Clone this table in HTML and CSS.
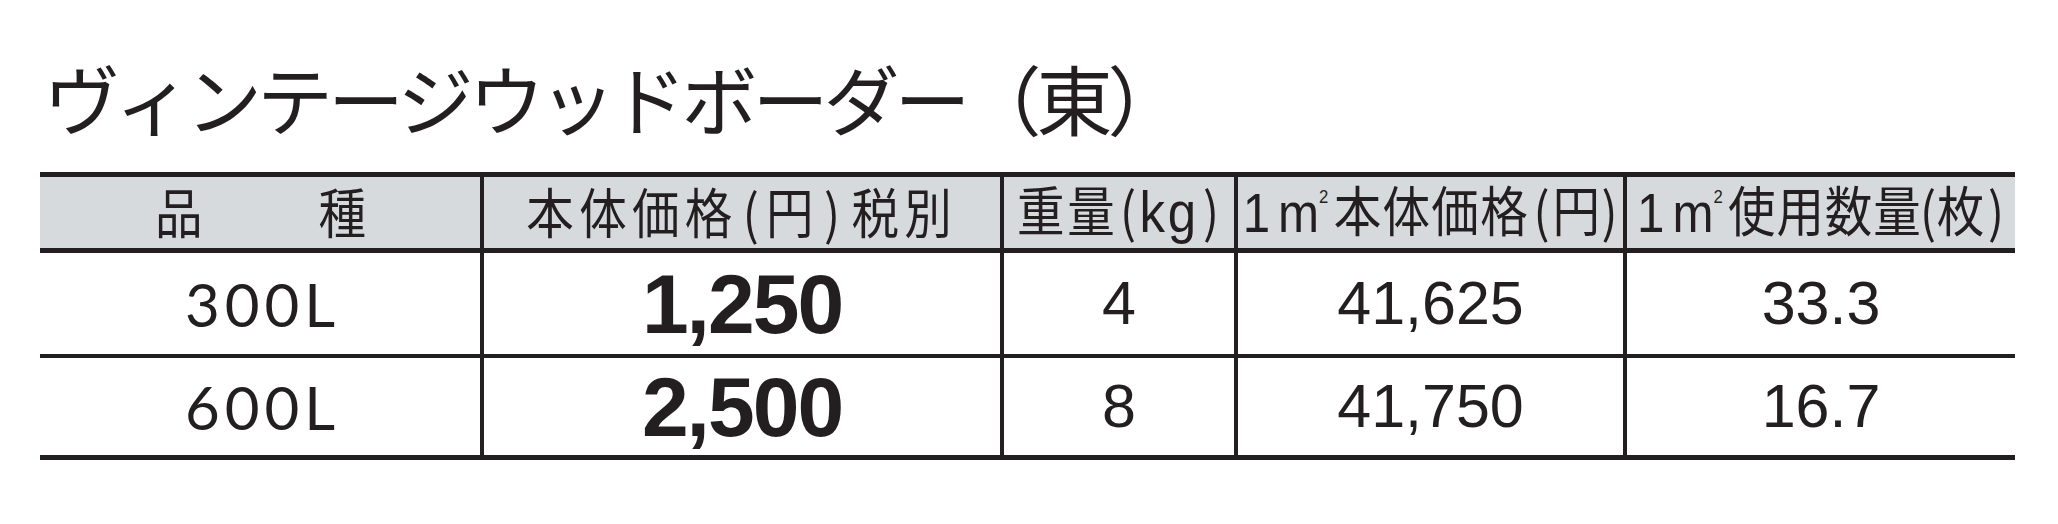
FILE: index.html
```html
<!DOCTYPE html>
<html lang="ja">
<head>
<meta charset="utf-8">
<title>ヴィンテージウッドボーダー（東）</title>
<link rel="stylesheet" href="styles.css">
</head>
<body>
<div class="page">
  <h1 class="title">ヴィンテージウッドボーダー（東）</h1>
  <div class="table">
    <div class="row head">
      <div class="cell"><span class="hx pin">品　　種</span></div>
      <div class="cell"><span class="hx c2">本体価格<span class="po">(</span>円<span class="pc">)</span>税別</span></div>
      <div class="cell"><span class="hx c3">重量<span class="po">(</span><span class="kg">kg</span><span class="pc">)</span></span></div>
      <div class="cell"><span class="hx c4"><span class="lat one">1</span><span class="lat m">m</span><span class="sq">2</span>本体価格<span class="po">(</span>円<span class="pc">)</span></span></div>
      <div class="cell"><span class="hx c5"><span class="lat one">1</span><span class="lat m">m</span><span class="sq">2</span>使用数量<span class="po">(</span>枚<span class="pc">)</span></span></div>
    </div>
    <div class="row r1">
      <div class="cell"><span class="size">300L</span></div>
      <div class="cell"><span class="price">1,250</span></div>
      <div class="cell"><span class="num">4</span></div>
      <div class="cell"><span class="num">41,625</span></div>
      <div class="cell"><span class="num">33.3</span></div>
    </div>
    <div class="row r2">
      <div class="cell"><span class="size">600L</span></div>
      <div class="cell"><span class="price">2,500</span></div>
      <div class="cell"><span class="num">8</span></div>
      <div class="cell"><span class="num">41,750</span></div>
      <div class="cell"><span class="num">16.7</span></div>
    </div>
  </div>
</div>
</body>
</html>
```
FILE: styles.css
```css
html, body {
  margin: 0;
  padding: 0;
  background: #ffffff;
}

body {
  color: #231f20;
  font-family: "Noto Sans CJK JP", "Noto Sans", sans-serif;
}

.page {
  padding: 62px 0 0 40px;
}

.title {
  margin: 0 0 39px 4px;
  font-family: "Noto Sans CJK JP", sans-serif;
  font-weight: 400;
  font-size: 76px;
  line-height: 71px;
  letter-spacing: -5px;
  color: #231f20;
}

.table {
  width: 1975px;
  border-top: 5px solid #231f20;
  border-bottom: 5px solid #231f20;
}

.row {
  display: grid;
  grid-template-columns: 440px 520px 234px 389px 392px;
}

.head {
  height: 71px;
  background: #d7dadc;
  border-bottom: 5px solid #231f20;
}

.r1 {
  height: 101px;
  border-bottom: 4px solid #231f20;
}

.r2 {
  height: 97px;
}

.cell {
  border-left: 4px solid #231f20;
  display: flex;
  align-items: center;
  justify-content: center;
  min-width: 0;
}

.cell:first-child {
  border-left: 0;
}

.head .cell {
  padding-bottom: 3px;
}

.hx {
  display: inline-block;
  flex: none;
  white-space: nowrap;
  font-family: "Noto Sans CJK JP", sans-serif;
  font-size: 54px;
  line-height: 1;
  letter-spacing: 3px;
  transform: scaleX(0.88);
  transform-origin: center;
}

.pin {
  letter-spacing: 8px;
  margin-left: 8px;
}

/* 本体価格(円)税別 */
.c2 {
  letter-spacing: 6px;
}

.c2 .po {
  margin: 0 2px 0 6px;
}

.c2 .pc {
  margin: 0 7px 0 6px;
}

/* 重量(kg) */
.c3 .po {
  margin: 0 1px 0 3px;
}

.c3 .pc {
  margin: 0 0 0 5px;
}

.kg {
  font-family: "Liberation Sans", Arial, sans-serif;
  font-size: 58px;
}

/* 1㎡本体価格(円) */
.c4 {
  letter-spacing: 1.5px;
}

.c4 .po {
  margin: 0 2px 0 5px;
}

/* 1㎡使用数量(枚) */
.c5 {
  letter-spacing: 1px;
}

.c5 .po {
  margin: 0 0 0 -2px;
}

.c5 .pc {
  margin: 0 0 0 3px;
}

.lat {
  font-family: "Liberation Sans", Arial, sans-serif;
  font-size: 56px;
}

.lat.one {
  letter-spacing: 0;
  margin-right: 9px;
}

.lat.m {
  letter-spacing: 0;
}

.sq {
  font-family: "Liberation Sans", Arial, sans-serif;
  font-size: 19px;
  line-height: 0;
  letter-spacing: 0;
  vertical-align: 29px;
  margin: 0 6px 0 0;
}

.size {
  font-family: Lato, "DejaVu Sans", sans-serif;
  font-size: 60px;
  line-height: 1;
  letter-spacing: 5px;
  margin-left: 5px;
}

.price {
  font-family: "Liberation Sans", Arial, sans-serif;
  font-weight: 700;
  font-size: 84px;
  line-height: 1;
  letter-spacing: -2px;
}

.num {
  font-family: "Liberation Sans", Arial, sans-serif;
  font-size: 61px;
  line-height: 1;
}
```
